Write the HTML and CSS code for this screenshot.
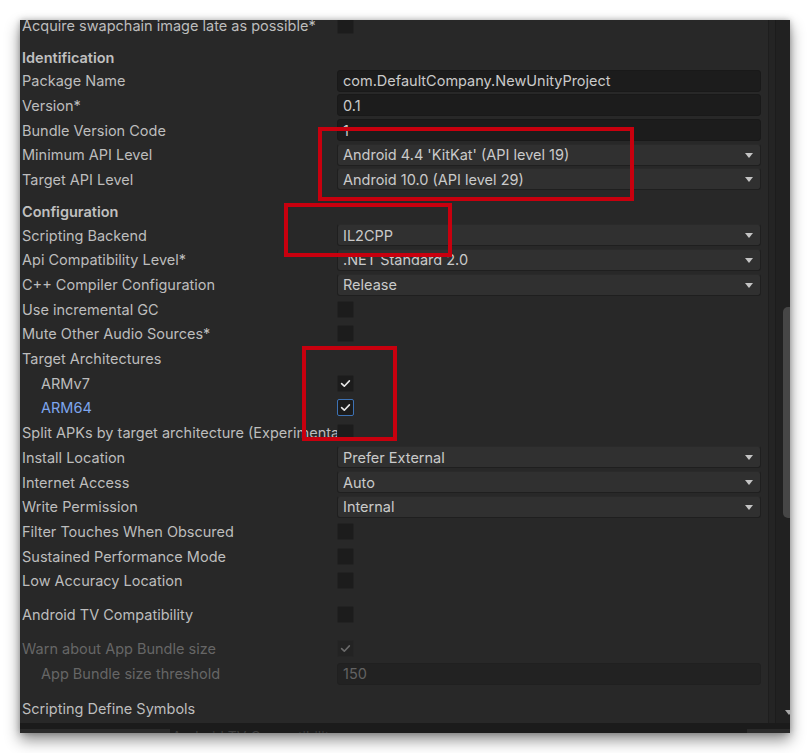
FILE: index.html
```html
<!DOCTYPE html>
<html>
<head>
<meta charset="utf-8">
<link rel="stylesheet" href="styles.css">
</head>
<body>
<div class="panel">
  <div class="main">
    <div class="inspector">
      <div class="rows">
        <div class="row"><span class="label">Acquire swapchain image late as possible*</span><span class="checkbox"></span></div>

        <div class="heading">Identification</div>
        <div class="row"><span class="label">Package Name</span><span class="field">com.DefaultCompany.NewUnityProject</span></div>
        <div class="row"><span class="label">Version*</span><span class="field">0.1</span></div>
        <div class="row"><span class="label">Bundle Version Code</span><span class="field">1</span></div>
        <div class="row"><span class="label">Minimum API Level</span><span class="dropdown">Android 4.4 'KitKat' (API level 19)</span></div>
        <div class="row"><span class="label">Target API Level</span><span class="dropdown">Android 10.0 (API level 29)</span></div>

        <div class="heading">Configuration</div>
        <div class="row"><span class="label">Scripting Backend</span><span class="dropdown">IL2CPP</span></div>
        <div class="row"><span class="label">Api Compatibility Level*</span><span class="dropdown">.NET Standard 2.0</span></div>
        <div class="row"><span class="label">C++ Compiler Configuration</span><span class="dropdown">Release</span></div>
        <div class="row"><span class="label">Use incremental GC</span><span class="checkbox"></span></div>
        <div class="row"><span class="label">Mute Other Audio Sources*</span><span class="checkbox"></span></div>
        <div class="row"><span class="label">Target Architectures</span></div>
        <div class="row"><span class="label indent">ARMv7</span><span class="checkbox checked"><svg viewBox="0 0 17 17" width="17" height="17"><path d="M4.6 8.6 L7.3 11.2 L12.4 5.9" fill="none" stroke="#e6e6e6" stroke-width="1.6" stroke-linecap="round" stroke-linejoin="round"/></svg></span></div>
        <div class="row"><span class="label indent active">ARM64</span><span class="checkbox checked focused"><svg viewBox="0 0 17 17" width="17" height="17"><path d="M4.6 8.6 L7.3 11.2 L12.4 5.9" fill="none" stroke="#e6e6e6" stroke-width="1.6" stroke-linecap="round" stroke-linejoin="round"/></svg></span></div>
        <div class="row"><span class="label">Split APKs by target architecture (Experimental)</span><span class="checkbox"></span></div>
        <div class="row"><span class="label">Install Location</span><span class="dropdown">Prefer External</span></div>
        <div class="row"><span class="label">Internet Access</span><span class="dropdown">Auto</span></div>
        <div class="row"><span class="label">Write Permission</span><span class="dropdown">Internal</span></div>
        <div class="row"><span class="label">Filter Touches When Obscured</span><span class="checkbox"></span></div>
        <div class="row"><span class="label">Sustained Performance Mode</span><span class="checkbox"></span></div>
        <div class="row"><span class="label">Low Accuracy Location</span><span class="checkbox"></span></div>

        <div class="row gap"><span class="label">Android TV Compatibility</span><span class="checkbox"></span></div>

        <div class="row gap-lg disabled"><span class="label">Warn about App Bundle size</span><span class="checkbox checked"><svg viewBox="0 0 17 17" width="17" height="17"><path d="M4.6 8.6 L7.3 11.2 L12.4 5.9" fill="none" stroke="#6a6a6a" stroke-width="1.6" stroke-linecap="round" stroke-linejoin="round"/></svg></span></div>
        <div class="row disabled"><span class="label indent">App Bundle size threshold</span><span class="field">150</span></div>

        <div class="row gap-xl"><span class="label">Scripting Define Symbols</span></div>
      </div>
    </div>
    <div class="scrollbar">
      <div class="track"><div class="thumb"></div><div class="arrow-down"></div></div>
    </div>
  </div>
  <div class="statusbar">
    <div class="strip"></div>
    <span class="ghost">Android TV Compatibility</span>
    <div class="strip"></div>
  </div>

  <div class="mark mark-api"></div>
  <div class="mark mark-backend"></div>
  <div class="mark mark-arch"></div>
</div>
</body>
</html>
```

FILE: styles.css
```css
html, body {
  margin: 0;
  padding: 0;
  background: #ffffff;
}

body {
  padding: 20px;
  font-family: "Inter", "Noto Sans", "DejaVu Sans", sans-serif;
  font-size: 14.5px;
}

.panel {
  position: relative;
  width: 770px;
  height: 713px;
  background: #282828;
  overflow: hidden;
  display: flex;
  flex-direction: column;
  box-shadow: 0 7px 14px rgba(0, 0, 0, 0.45), 0 0 6px rgba(0, 0, 0, 0.25);
}

.main {
  flex: 1;
  display: flex;
  min-height: 0;
}

.inspector {
  flex: 1;
  min-width: 0;
  padding: 0 7px 0 2px;
  overflow: hidden;
}

.rows {
  margin-top: -7.35px;
}

.row {
  height: 24.7px;
  display: flex;
  align-items: center;
  color: #bdbdbd;
}

.heading {
  height: 23px;
  margin-top: 8px;
  display: flex;
  align-items: center;
  padding-top: 1px;
  box-sizing: border-box;
  font-weight: 600;
  color: #c0c0c0;
}

.row.gap { margin-top: 8.8px; }
.row.gap-lg { margin-top: 10px; }
.row.gap-xl { margin-top: 10.6px; }

.label {
  width: 315px;
  flex: none;
  white-space: nowrap;
  overflow: hidden;
}

.label.indent {
  padding-left: 19px;
  box-sizing: border-box;
}

.label.active {
  color: #7ea6ee;
}

.field,
.dropdown {
  flex: 1;
  height: 22px;
  box-sizing: border-box;
  border-radius: 3px;
  display: flex;
  align-items: center;
  padding-left: 5px;
  white-space: nowrap;
  color: #cacaca;
}

.field {
  background: #1c1c1c;
  border: 1px solid #191919;
}

.dropdown {
  position: relative;
  background: #303030;
  border: 1px solid #1f1f1f;
  border-top-color: #2a2a2a;
}

.dropdown::after {
  content: "";
  position: absolute;
  right: 7px;
  top: 8px;
  border-left: 4.5px solid transparent;
  border-right: 4.5px solid transparent;
  border-top: 5px solid #c4c4c4;
}

.checkbox {
  width: 17px;
  height: 17px;
  box-sizing: border-box;
  border-radius: 2px;
  background: #1c1c1c;
  border: 1px solid #222222;
  display: flex;
  align-items: center;
  justify-content: center;
}

.checkbox svg {
  display: block;
  flex: none;
  margin: -1px;
}

.checkbox.focused {
  border-color: #3d72b4;
}

.row.disabled {
  color: #666666;
}

.row.disabled .field {
  background: #222222;
  border-color: #202020;
  color: #626262;
}

.row.disabled .checkbox {
  background: #232323;
  border-color: #262626;
}

.scrollbar {
  width: 22px;
  flex: none;
  border-left: 1px solid #1e1e1e;
  box-sizing: border-box;
  background: #242424;
  display: flex;
}

.track {
  position: relative;
  margin-left: 6px;
  flex: 1;
  border-left: 1px solid #1c1c1c;
  background: #212121;
}

.thumb {
  position: absolute;
  left: 7px;
  top: 287px;
  width: 12px;
  height: 211px;
  border-radius: 5px;
  background: #464646;
}

.arrow-down {
  position: absolute;
  left: 9px;
  top: 690px;
  border-left: 4px solid transparent;
  border-right: 4px solid transparent;
  border-top: 5px solid #a8a8a8;
}

.statusbar {
  height: 10px;
  flex: none;
  background: #1b1b1b;
  display: flex;
  align-items: flex-end;
  gap: 0;
  overflow: hidden;
}

.strip {
  width: 150px;
  height: 4px;
  background: #2a2a2a;
  flex: none;
}

.strip:last-child {
  width: 43px;
  margin-left: auto;
}

.ghost {
  align-self: flex-start;
  margin-top: 5px;
  margin-left: 2px;
  font-size: 14px;
  line-height: 17px;
  color: #3a3a3a;
  white-space: nowrap;
}

.mark {
  position: absolute;
  border: 4px solid #c8000e;
  box-sizing: border-box;
}

.mark-api {
  left: 298px;
  top: 107px;
  width: 316px;
  height: 74px;
}

.mark-backend {
  left: 264px;
  top: 183px;
  width: 168px;
  height: 54px;
}

.mark-arch {
  left: 282px;
  top: 326px;
  width: 95px;
  height: 95px;
}
```
